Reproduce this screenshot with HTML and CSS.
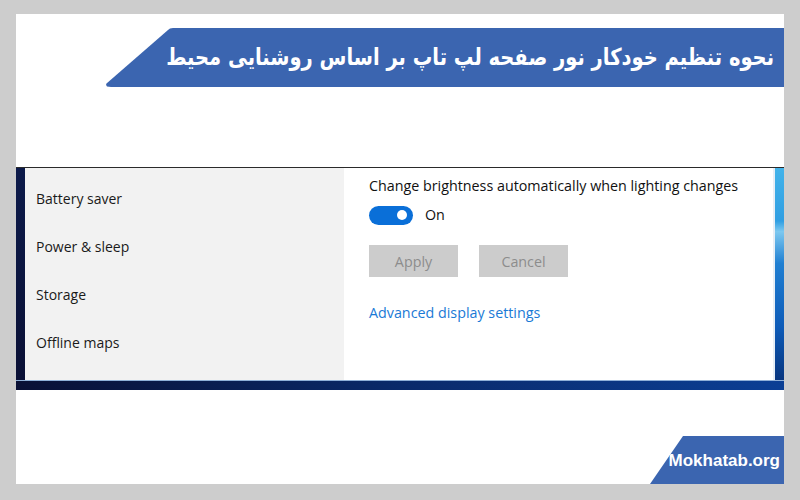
FILE: index.html
```html
<!DOCTYPE html>
<html lang="fa">
<head>
<meta charset="utf-8">
<link rel="stylesheet" href="styles.css">
</head>
<body>
<div class="card">
  <div class="banner">
    <h1 class="banner-text" dir="rtl">نحوه تنظیم خودکار نور صفحه لپ تاپ بر اساس روشنایی محیط</h1>
  </div>
  <div class="shot">
    <div class="shot-body">
      <div class="edge-left"></div>
      <ul class="nav">
        <li>Battery saver</li>
        <li>Power &amp; sleep</li>
        <li>Storage</li>
        <li>Offline maps</li>
      </ul>
      <div class="content">
        <p class="setting-label">Change brightness automatically when lighting changes</p>
        <div class="toggle-row">
          <span class="toggle"><span class="knob"></span></span>
          <span class="toggle-label">On</span>
        </div>
        <div class="buttons">
          <span class="btn">Apply</span>
          <span class="btn">Cancel</span>
        </div>
        <a class="link">Advanced display settings</a>
      </div>
      <div class="edge-line"></div>
      <div class="edge-right"></div>
    </div>
    <div class="shot-bottom"></div>
  </div>
  <div class="footer">
    <div class="badge">Mokhatab.org</div>
  </div>
</div>
</body>
</html>
```
FILE: styles.css
```css
* { box-sizing: border-box; }
html, body { margin: 0; padding: 0; }
body {
  width: 800px;
  height: 500px;
  background: #cdcdcd;
  overflow: hidden;
  font-family: "Open Sans", "Noto Sans", sans-serif;
}
.card {
  margin: 14px 16px 0 16px;
  height: 470px;
  background: #ffffff;
  padding-top: 14px;
  display: flex;
  flex-direction: column;
}
.banner {
  margin-left: 90px;
  height: 59px;
  background: #3b65b0;
  clip-path: polygon(62px 2px, 64px 0.5px, 67px 0, 100% 0, 100% 100%, 5px 100%, 1px 99%, 0 96%, 0.5px 94%);
  display: flex;
  align-items: center;
  justify-content: flex-end;
  padding-right: 10px;
}
.banner-text {
  margin: 0;
  color: #ffffff;
  font-family: "DejaVu Sans", "Noto Sans", sans-serif;
  font-weight: bold;
  font-size: 19.5px;
  line-height: 1;
  white-space: nowrap;
  transform: scaleY(1.2);
}
.shot {
  margin-top: 80px;
  border-top: 1px solid #2a2a2a;
  display: flex;
  flex-direction: column;
}
.shot-body {
  display: flex;
  height: 212px;
}
.edge-left {
  width: 9px;
  background: linear-gradient(180deg, #0c1a4a 0%, #0a1035 100%);
}
.nav {
  list-style: none;
  margin: 0;
  padding: 7px 0 0 11px;
  width: 319px;
  background: #f2f2f2;
  color: #1a1a1a;
  font-size: 14px;
}
.nav li {
  height: 48px;
  line-height: 48px;
}
.content {
  flex: 1;
  background: #ffffff;
  padding: 8px 0 0 25px;
  color: #111111;
  font-size: 14.3px;
}
.setting-label {
  margin: 0;
  line-height: 20px;
}
.toggle-row {
  display: flex;
  align-items: center;
  gap: 12px;
  margin-top: 9px;
  height: 20px;
}
.toggle {
  width: 44px;
  height: 19px;
  border-radius: 10px;
  background: #0a6fd8;
  display: flex;
  align-items: center;
  justify-content: flex-end;
  padding-right: 6px;
}
.knob {
  width: 10px;
  height: 10px;
  border-radius: 50%;
  background: #ffffff;
}
.toggle-label {
  line-height: 20px;
}
.buttons {
  display: flex;
  gap: 21px;
  margin-top: 20px;
}
.btn {
  width: 89px;
  height: 32px;
  background: #cccccc;
  color: #8c8c8c;
  display: flex;
  align-items: center;
  justify-content: center;
}
.link {
  display: block;
  margin-top: 26px;
  color: #1a7ad6;
  line-height: 20px;
}
.edge-line {
  width: 2px;
  background: #e6eef6;
}
.edge-right {
  width: 9px;
  background: linear-gradient(180deg, #42b3ea 0%, #2f9ee2 25%, #7cc8f0 30%, #1f7fd2 45%, #0d5bb8 75%, #07357f 100%);
}
.shot-bottom {
  height: 10px;
  border-top: 1px solid #8fb0d8;
  background: linear-gradient(90deg, #0a1035 0%, #0a2a6a 50%, #0b3f95 100%);
}
.footer {
  margin-top: auto;
  display: flex;
  justify-content: flex-end;
}
.badge {
  width: 134px;
  height: 48px;
  background: #3b65b0;
  clip-path: polygon(33px 0, 100% 0, 100% 100%, 0 100%);
  color: #ffffff;
  font-family: "Liberation Sans", Arial, sans-serif;
  font-weight: bold;
  font-size: 17px;
  display: flex;
  align-items: center;
  justify-content: flex-end;
  padding-right: 4px;
  padding-top: 1px;
}
```
